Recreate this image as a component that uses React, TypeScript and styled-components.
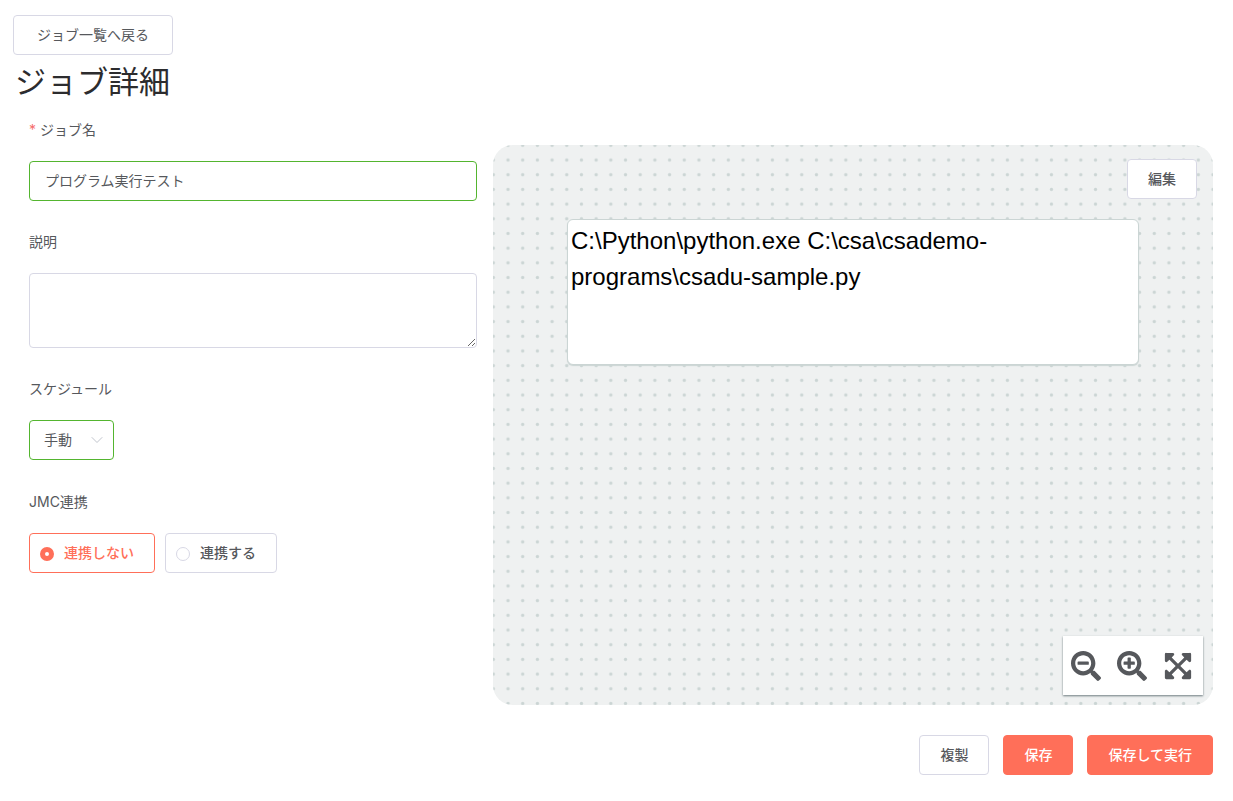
import React, { useState } from "react";
import styled, { createGlobalStyle, css } from "styled-components";
import { FaExpandArrowsAlt, FaSearchMinus, FaSearchPlus } from "react-icons/fa";

const color = {
  text: "#56585c",
  heading: "#2c2c2e",
  border: "#d8d8e5",
  success: "#54b52f",
  primary: "#ff6f59",
  danger: "#f56c6c",
  canvas: "#eff1f1",
  dot: "#cbd5d4",
};

const GlobalStyle = createGlobalStyle`
  *, *::before, *::after {
    box-sizing: border-box;
  }

  body {
    margin: 0;
    background: #fff;
    color: ${color.text};
    font-family: Inter, "Noto Sans CJK JP", sans-serif;
    font-size: 14px;
  }

  button, input, select, textarea {
    font: inherit;
    color: inherit;
  }
`;

const Page = styled.div`
  padding: 15px 20px 24px 13px;
`;

const Title = styled.h1`
  margin: 0 0 2px;
  padding-left: 2px;
  color: ${color.heading};
  font-size: 31px;
  font-weight: 400;
  line-height: 54px;
`;

const Button = styled.button<{ $primary?: boolean; $wide?: boolean }>`
  display: block;
  height: 40px;
  padding: 0 ${(p) => (p.$wide ? 23 : 20)}px;
  border: 1px solid ${(p) => (p.$primary ? color.primary : color.border)};
  border-radius: 4px;
  background: ${(p) => (p.$primary ? color.primary : "#fff")};
  color: ${(p) => (p.$primary ? "#fff" : color.text)};
  font-weight: ${(p) => (p.$wide ? 400 : 500)};
  line-height: 38px;
  white-space: nowrap;
  cursor: pointer;
`;

const Columns = styled.main`
  display: grid;
  grid-template-columns: 28fr 45fr;
  gap: 16px;
  padding-left: 16px;
`;

const Form = styled.form`
  display: flex;
  flex-direction: column;
  gap: 22px;
  min-width: 0;
`;

const Field = styled.div`
  display: flex;
  flex-direction: column;
  gap: 12px;
  align-items: flex-start;
`;

const labelText = css`
  line-height: 38px;
  padding: 0;
`;

const Label = styled.label`
  ${labelText}
`;

const Required = styled.span`
  margin-right: 4px;
  color: ${color.danger};
`;

const control = css<{ $valid?: boolean }>`
  border: 1px solid ${(p) => (p.$valid ? color.success : color.border)};
  border-radius: 4px;
  background: #fff;
  outline: none;
`;

const TextInput = styled.input<{ $valid?: boolean }>`
  ${control}
  width: 100%;
  height: 40px;
  padding: 0 15px 3px;
`;

const TextArea = styled.textarea`
  ${control}
  display: block;
  width: 100%;
  height: 75px;
  padding: 5px 15px;
  line-height: 21px;
  resize: vertical;
`;

const SelectBox = styled.div`
  display: grid;
  align-items: center;

  > * {
    grid-area: 1 / 1;
  }

  > svg {
    justify-self: end;
    margin-right: 11px;
    pointer-events: none;
  }
`;

const Select = styled.select<{ $valid?: boolean }>`
  ${control}
  appearance: none;
  height: 40px;
  padding: 0 41px 2px 14px;
`;

const RadioField = styled.fieldset`
  min-width: 0;
  margin: 0;
  padding: 0;
  border: 0;
`;

const Legend = styled.legend`
  ${labelText}
  margin-bottom: 12px;
  padding-top: 1px;
`;

const RadioRow = styled.div`
  display: flex;
  gap: 10px;
`;

const RadioCard = styled.label<{ $checked: boolean }>`
  display: flex;
  align-items: center;
  gap: 10px;
  height: 40px;
  padding: 0 20px 0 10px;
  border: 1px solid ${(p) => (p.$checked ? color.primary : color.border)};
  border-radius: 4px;
  color: ${(p) => (p.$checked ? color.primary : color.text)};
  font-weight: 500;
  line-height: 38px;
  cursor: pointer;
`;

const Radio = styled.input`
  appearance: none;
  width: 14px;
  height: 14px;
  margin: 2px 0 0;
  border: 1px solid ${color.border};
  border-radius: 50%;
  background: #fff;

  &:checked {
    border: 5px solid ${color.primary};
  }
`;

const Side = styled.div`
  display: flex;
  flex-direction: column;
  gap: 30px;
  min-width: 0;
  padding-top: 34px;
`;

const Canvas = styled.section`
  position: relative;
  min-height: 560px;
  padding: 74px;
  overflow: hidden;
  border-radius: 20px;
  background: ${color.canvas};
`;

const DotGrid = styled.svg`
  position: absolute;
  inset: 0;
  width: 100%;
  height: 100%;
`;

const CommandNode = styled.div`
  position: relative;
  min-height: 146px;
  padding: 3px;
  border: 1px solid ${color.dot};
  border-radius: 6px;
  background: #fff;
  box-shadow: 0 1px 1px ${color.dot};
  color: #000;
  font-family: "Liberation Sans", "Noto Sans CJK JP", sans-serif;
  font-size: 24px;
  line-height: 36px;
`;

const EditSlot = styled.div`
  position: absolute;
  top: 14px;
  right: 16px;
`;

const ZoomBar = styled.div`
  position: absolute;
  right: 10px;
  bottom: 10px;
  display: flex;
  align-items: center;
  gap: 16px;
  height: 59px;
  padding: 0 10px 0 8px;
  background: #fff;
  box-shadow: 0 1px 2px #6f7c80;
`;

const IconButton = styled.button`
  display: flex;
  padding: 0;
  border: 0;
  background: none;
  color: #56585c;
  font-size: 30px;
  cursor: pointer;
`;

const Actions = styled.footer`
  display: flex;
  justify-content: flex-end;
  gap: 14px;
`;

const linkOptions = [
  { value: "off", label: "連携しない" },
  { value: "on", label: "連携する" },
];

export default function App() {
  const [name, setName] = useState("プログラム実行テスト");
  const [link, setLink] = useState("off");

  return (
    <>
      <GlobalStyle />
      <Page>
        <Button type="button" $wide>
          ジョブ一覧へ戻る
        </Button>
        <Title>ジョブ詳細</Title>
        <Columns>
          <Form>
            <Field>
              <Label htmlFor="job-name">
                <Required>*</Required>ジョブ名
              </Label>
              <TextInput
                id="job-name"
                $valid
                required
                value={name}
                onChange={(e) => setName(e.target.value)}
              />
            </Field>
            <Field>
              <Label htmlFor="description">説明</Label>
              <TextArea id="description" />
            </Field>
            <Field>
              <Label htmlFor="schedule">スケジュール</Label>
              <SelectBox>
                <Select id="schedule" $valid defaultValue="manual">
                  <option value="manual">手動</option>
                </Select>
                <svg width="12" height="8" viewBox="0 0 12 8" fill="none" stroke="#c0c4cc">
                  <path d="M1 1.5 6 6.5 11 1.5" strokeLinecap="round" strokeLinejoin="round" />
                </svg>
              </SelectBox>
            </Field>
            <RadioField>
              <Legend>JMC連携</Legend>
              <RadioRow>
                {linkOptions.map((o) => (
                  <RadioCard key={o.value} $checked={link === o.value}>
                    <Radio
                      type="radio"
                      name="jmc"
                      value={o.value}
                      checked={link === o.value}
                      onChange={() => setLink(o.value)}
                    />
                    <span>{o.label}</span>
                  </RadioCard>
                ))}
              </RadioRow>
            </RadioField>
          </Form>
          <Side>
            <Canvas>
              <DotGrid aria-hidden="true">
                <defs>
                  <pattern
                    id="dots"
                    width="44"
                    height="44"
                    patternUnits="userSpaceOnUse"
                    patternTransform="translate(-7 -7) scale(0.3338)"
                  >
                    <circle cx="22" cy="22" r="5" fill={color.dot} />
                  </pattern>
                </defs>
                <rect width="100%" height="100%" fill="url(#dots)" />
              </DotGrid>
              <CommandNode>
                C:\Python\python.exe C:\csa\csademo-
                <br />
                programs\csadu-sample.py
              </CommandNode>
              <EditSlot>
                <Button type="button">編集</Button>
              </EditSlot>
              <ZoomBar>
                <IconButton type="button" aria-label="縮小">
                  <FaSearchMinus />
                </IconButton>
                <IconButton type="button" aria-label="拡大">
                  <FaSearchPlus />
                </IconButton>
                <IconButton type="button" aria-label="全体表示">
                  <FaExpandArrowsAlt />
                </IconButton>
              </ZoomBar>
            </Canvas>
            <Actions>
              <Button type="button">複製</Button>
              <Button type="button" $primary>
                保存
              </Button>
              <Button type="button" $primary>
                保存して実行
              </Button>
            </Actions>
          </Side>
        </Columns>
      </Page>
    </>
  );
}
